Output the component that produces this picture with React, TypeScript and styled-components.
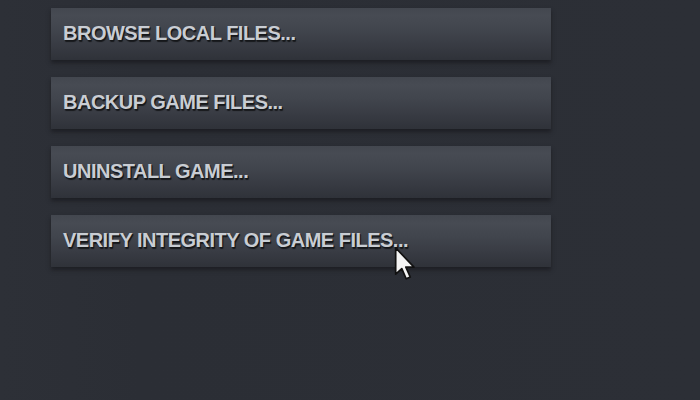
import React from "react";
import styled, { createGlobalStyle } from "styled-components";

const Global = createGlobalStyle`
  html, body { margin: 0; padding: 0; background: #2b2e35; }
  body { width: 700px; height: 400px; overflow: hidden; }
`;

const Screen = styled.div`
  position: relative;
  width: 700px;
  height: 400px;
  background: linear-gradient(90deg, #2d3037 0%, #2b2e35 20%, #2c2f36 100%);
  box-sizing: border-box;
  padding: 8px 0 0 51px;
`;

const Menu = styled.div`
  display: flex;
  flex-direction: column;
  gap: 17px;
  width: 500px;
`;

const Item = styled.div`
  height: 52px;
  box-sizing: border-box;
  padding: 0 0 1px 12px;
  display: flex;
  align-items: center;
  background: linear-gradient(
    180deg,
    #43474f 0%,
    #474b53 15%,
    #41454d 42%,
    #383b43 72%,
    #2f3239 100%
  );
  box-shadow: 0 3px 4px rgba(18, 19, 22, 0.55);
  font-family: "Liberation Sans", Arial, sans-serif;
  font-weight: 700;
  font-size: 20px;
  letter-spacing: -0.5px;
  color: #c9cdd3;
  text-shadow: 1px 1px 0 #15171a, 1px 2px 1px rgba(0, 0, 0, 0.6);
  white-space: nowrap;
`;

const Cursor = styled.svg`
  position: absolute;
  left: 394px;
  top: 246px;
  width: 22px;
  height: 36px;
`;

const items = [
  "BROWSE LOCAL FILES...",
  "BACKUP GAME FILES...",
  "UNINSTALL GAME...",
  "VERIFY INTEGRITY OF GAME FILES...",
];

export default function App() {
  return (
    <>
      <Global />
      <Screen>
        <Menu>
          {items.map((t) => (
            <Item key={t}>{t}</Item>
          ))}
        </Menu>
        <Cursor viewBox="0 0 13 21">
          <path
            d="M1 1 L1 16.5 L4.6 13.2 L7.2 19.2 L9.6 18.2 L7 12.3 L11.8 12.3 Z"
            fill="#f4f4f4"
            stroke="#111"
            strokeWidth="1"
            strokeLinejoin="round"
          />
        </Cursor>
      </Screen>
    </>
  );
}
